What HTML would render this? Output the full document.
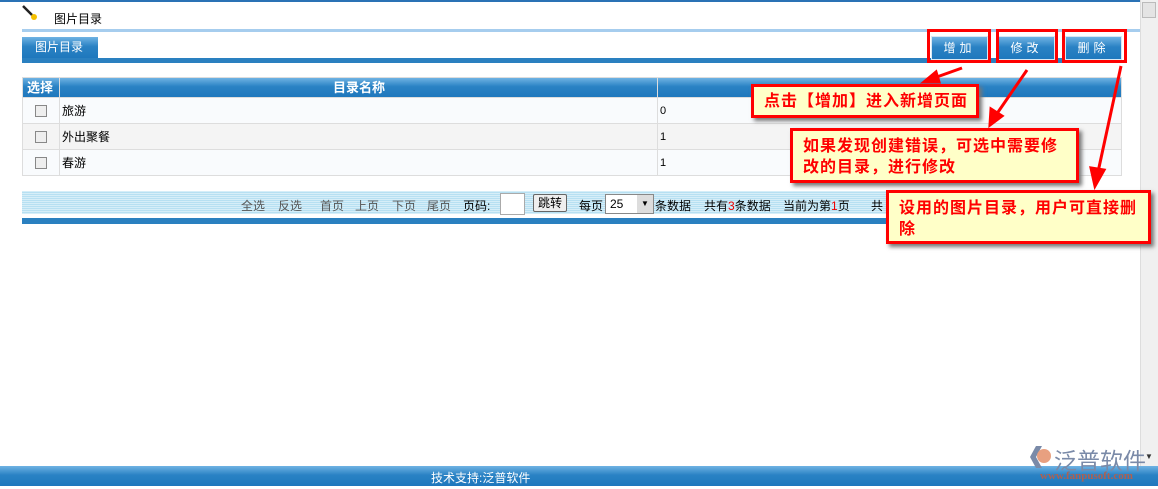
<!DOCTYPE html>
<html><head><meta charset="utf-8"><style>
*{margin:0;padding:0;box-sizing:border-box}
body{width:1158px;height:489px;position:relative;overflow:hidden;background:#fff;font-family:"Liberation Sans","Noto Sans CJK SC",sans-serif;font-size:12px;color:#000}
.a{position:absolute;white-space:nowrap}
.blue{background:linear-gradient(#6fb3e3,#2a82c4 45%,#1f78bd)}
.btn{color:#fff;text-align:center;line-height:22px;font-size:12px;letter-spacing:4px;border:1px solid #d8e8f4}
.rb{border:3px solid #f00}
.call{background:#ffffc8;border:3px solid #f00;color:#f00;font-weight:bold;font-size:16px;letter-spacing:1px;box-shadow:3px 3px 4px #777;padding:3px 8px;line-height:21px;white-space:nowrap;overflow:hidden}
.row{position:absolute;left:22px;width:1100px;height:26px;border:1px solid #ddd;border-top:none;line-height:27px}
.row span{position:absolute}
.cb{display:inline-block;width:12px;height:12px;border:1px solid #888;background:#eee;left:12px;top:7px}
.g{color:#555}
</style></head><body>
<div class="a" style="left:0;top:0;width:1140px;height:2px;background:#2a72b5"></div>
<svg class="a" style="left:22px;top:5px" width="16" height="16"><line x1="1" y1="1" x2="10" y2="10" stroke="#222" stroke-width="2.5"/><circle cx="12" cy="12" r="3" fill="#f5c000"/></svg>
<div class="a" style="left:54px;top:10px;font-size:12px">图片目录</div>
<div class="a" style="left:22px;top:29px;width:1118px;height:3px;background:#a6cdee"></div>
<div class="a blue" style="left:22px;top:37px;width:76px;height:21px;color:#fff;line-height:21px;padding-left:13px">图片目录</div>
<div class="a" style="left:22px;top:58px;width:1100px;height:5px;background:#2a80c0"></div>
<div class="a blue btn" style="left:931px;top:36px;width:57px;height:24px">增加</div>
<div class="a blue btn" style="left:998px;top:36px;width:57px;height:24px">修改</div>
<div class="a blue btn" style="left:1065px;top:36px;width:57px;height:24px">删除</div>
<div class="a rb" style="left:927px;top:29px;width:64px;height:34px"></div>
<div class="a rb" style="left:996px;top:29px;width:62px;height:34px"></div>
<div class="a rb" style="left:1062px;top:29px;width:65px;height:34px"></div>
<div class="a blue" style="left:22px;top:77px;width:1100px;height:21px;border:1px solid #ddd;color:#fff;font-weight:bold;font-size:13px;line-height:19px">
<span class="a" style="left:4px">选择</span><span class="a" style="left:36px;top:0;width:1px;height:20px;background:#ddd"></span>
<span class="a" style="left:310px">目录名称</span><span class="a" style="left:634px;top:0;width:1px;height:20px;background:#ddd"></span></div>
<div class="row" style="top:98px;background:#f9fbfd"><span class="cb"></span><span style="left:36px;top:0;width:1px;height:25px;background:#ddd"></span><span style="left:39px">旅游</span><span style="left:634px;top:0;width:1px;height:25px;background:#ddd"></span><span style="left:637px;font-size:11px">0</span></div>
<div class="row" style="top:124px;background:#f4f4f4"><span class="cb"></span><span style="left:36px;top:0;width:1px;height:25px;background:#ddd"></span><span style="left:39px">外出聚餐</span><span style="left:634px;top:0;width:1px;height:25px;background:#ddd"></span><span style="left:637px;font-size:11px">1</span></div>
<div class="row" style="top:150px;background:#f9fbfd"><span class="cb"></span><span style="left:36px;top:0;width:1px;height:25px;background:#ddd"></span><span style="left:39px">春游</span><span style="left:634px;top:0;width:1px;height:25px;background:#ddd"></span><span style="left:637px;font-size:11px">1</span></div>
<div class="a" style="left:22px;top:191px;width:1100px;height:23px;background:repeating-linear-gradient(#d6eef8 0 1px,#b7e0f2 1px 2px)"></div>
<div class="a g" style="left:241px;top:197px">全选</div>
<div class="a g" style="left:278px;top:197px">反选</div>
<div class="a g" style="left:320px;top:197px">首页</div>
<div class="a g" style="left:355px;top:197px">上页</div>
<div class="a g" style="left:392px;top:197px">下页</div>
<div class="a g" style="left:427px;top:197px">尾页</div>
<div class="a" style="left:463px;top:197px">页码:</div>
<div class="a" style="left:500px;top:193px;width:25px;height:22px;background:#fff;border:1px solid #aaa"></div>
<div class="a" style="left:533px;top:194px;width:34px;height:18px;border:1px solid #666;border-radius:2px;background:#eee;text-align:center;line-height:16px">跳转</div>
<div class="a" style="left:579px;top:197px">每页</div>
<div class="a" style="left:605px;top:194px;width:49px;height:20px;background:#fff;border:1px solid #888;padding-left:4px;line-height:18px">25<span style="position:absolute;right:0;top:0;width:16px;height:18px;background:#ddd;font-size:8px;text-align:center">▼</span></div>
<div class="a" style="left:655px;top:197px">条数据</div>
<div class="a" style="left:704px;top:197px">共有<span style="color:#e00">3</span>条数据</div>
<div class="a" style="left:783px;top:197px">当前为第<span style="color:#e00">1</span>页</div>
<div class="a" style="left:871px;top:197px">共</div>
<div class="a" style="left:22px;top:218px;width:1100px;height:6px;background:#2a80c0"></div>
<div class="a" style="left:1140px;top:0;width:18px;height:466px;background:#f0f0f0;border-left:1px solid #ddd"></div>
<div class="a" style="left:1142px;top:2px;width:14px;height:16px;background:#e4e4e4;border:1px solid #bbb"></div>
<div class="a" style="left:1145px;top:452px;font-size:8px;color:#333">▼</div>
<svg class="a" style="left:0;top:0" width="1158" height="489">
<g stroke="#f00" stroke-width="3" fill="#f00">
<line x1="962" y1="68" x2="934" y2="78"/><polygon points="924,82 936,72 939,82"/>
<line x1="1027" y1="70" x2="996" y2="115"/><polygon points="990,125 991,109 1002,116"/>
<line x1="1121" y1="66" x2="1098" y2="172"/><polygon points="1095,186 1091,168 1104,170"/>
</g></svg>
<div class="a call" style="left:751px;top:84px;width:228px;height:34px;padding-left:10px;padding-top:4px">点击【增加】进入新增页面</div>
<div class="a call" style="left:790px;top:128px;width:289px;height:55px;padding-left:10px;padding-top:5px">如果发现创建错误，可选中需要修<br>改的目录，进行修改</div>
<div class="a call" style="left:886px;top:190px;width:265px;height:54px;padding-left:10px;padding-top:5px">设用的图片目录，用户可直接删<br>除</div>
<div class="a blue" style="left:0;top:466px;width:1158px;height:20px"></div>
<div class="a" style="left:431px;top:469px;color:#fff">技术支持:泛普软件</div>
<svg class="a" style="left:1030px;top:446px" width="22" height="22"><polygon points="0,11 6,0 12,0 6,11 12,22 6,22" fill="#7a8aa8"/><circle cx="14" cy="10" r="7" fill="#e8a080"/></svg>
<div class="a" style="left:1054px;top:442px;font-size:23px;color:#7a8aa8">泛普软件</div>
<div class="a" style="left:1040px;top:470px;font-size:11px;color:#b06050;font-family:'Liberation Serif',serif;font-weight:bold">www.fanpusoft.com</div>
</body></html>
